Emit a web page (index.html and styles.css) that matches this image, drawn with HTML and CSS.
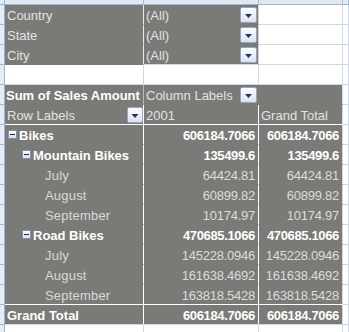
FILE: index.html
```html
<!DOCTYPE html>
<html>
<head>
<meta charset="utf-8">
<link rel="stylesheet" href="styles.css">
</head>
<body>
<div class="sheet">
  <div class="row head"><div class="rh"></div><div class="ch"></div><div class="ch"></div><div class="ch"></div><div class="ch"></div></div>

  <div class="row"><div class="rh"></div><div class="c g ga bb-g">Country</div><div class="c g bb-g"><span class="btn"><svg width="15" height="14" viewBox="0 0 15 14"><path d="M4 6h7l-3.5 4z" fill="#22356a"/></svg></span>(All)</div><div class="c"></div><div class="c"></div></div>
  <div class="row"><div class="rh"></div><div class="c g ga bb-g">State</div><div class="c g bb-g"><span class="btn"><svg width="15" height="14" viewBox="0 0 15 14"><path d="M4 6h7l-3.5 4z" fill="#22356a"/></svg></span>(All)</div><div class="c"></div><div class="c"></div></div>
  <div class="row"><div class="rh"></div><div class="c g ga">City</div><div class="c g"><span class="btn"><svg width="15" height="14" viewBox="0 0 15 14"><path d="M4 6h7l-3.5 4z" fill="#22356a"/></svg></span>(All)</div><div class="c"></div><div class="c"></div></div>

  <div class="row"><div class="rh"></div><div class="c"></div><div class="c"></div><div class="c"></div><div class="c"></div></div>

  <div class="row"><div class="rh"></div><div class="c g bb-g br-s b sum">Sum of Sales Amount</div><div class="c g bb-g br-g"><span class="btn"><svg width="15" height="14" viewBox="0 0 15 14"><path d="M4 6h7l-3.5 4z" fill="#22356a"/></svg></span>Column Labels</div><div class="c g bb-g"></div><div class="c"></div></div>
  <div class="row"><div class="rh"></div><div class="c g br-w bb-w"><span class="btn flush"><svg width="14" height="14" viewBox="0 0 14 14"><path d="M3.5 6h7l-3.5 4z" fill="#22356a"/></svg></span>Row Labels</div><div class="c g br-w bb-w">2001</div><div class="c g bb-w">Grand Total</div><div class="c"></div></div>

  <div class="row"><div class="rh"></div><div class="c g br-w bb-g b l1"><span class="tg"></span>Bikes</div><div class="c g br-w bb-g b n">606184.7066</div><div class="c g bb-g b n">606184.7066</div><div class="c"></div></div>
  <div class="row"><div class="rh"></div><div class="c g br-w bb-g b l2"><span class="tg"></span>Mountain Bikes</div><div class="c g br-w bb-g b n">135499.6</div><div class="c g bb-g b n">135499.6</div><div class="c"></div></div>
  <div class="row"><div class="rh"></div><div class="c g br-w bb-g l3">July</div><div class="c g br-w bb-g n">64424.81</div><div class="c g bb-g n">64424.81</div><div class="c"></div></div>
  <div class="row"><div class="rh"></div><div class="c g br-w bb-g l3">August</div><div class="c g br-w bb-g n">60899.82</div><div class="c g bb-g n">60899.82</div><div class="c"></div></div>
  <div class="row"><div class="rh"></div><div class="c g br-w bb-g l3">September</div><div class="c g br-w bb-g n">10174.97</div><div class="c g bb-g n">10174.97</div><div class="c"></div></div>
  <div class="row"><div class="rh"></div><div class="c g br-w bb-g b l2"><span class="tg"></span>Road Bikes</div><div class="c g br-w bb-g b n">470685.1066</div><div class="c g bb-g b n">470685.1066</div><div class="c"></div></div>
  <div class="row"><div class="rh"></div><div class="c g br-w bb-g l3">July</div><div class="c g br-w bb-g n">145228.0946</div><div class="c g bb-g n">145228.0946</div><div class="c"></div></div>
  <div class="row"><div class="rh"></div><div class="c g br-w bb-g l3">August</div><div class="c g br-w bb-g n">161638.4692</div><div class="c g bb-g n">161638.4692</div><div class="c"></div></div>
  <div class="row"><div class="rh"></div><div class="c g br-w bb-w l3">September</div><div class="c g br-w bb-w n">163818.5428</div><div class="c g bb-w n">163818.5428</div><div class="c"></div></div>

  <div class="row"><div class="rh"></div><div class="c g br-w b">Grand Total</div><div class="c g br-w b n">606184.7066</div><div class="c g b n">606184.7066</div><div class="c"></div></div>

  <div class="row"><div class="rh"></div><div class="c"></div><div class="c"></div><div class="c"></div><div class="c"></div></div>
</div>
</body>
</html>
```

FILE: styles.css
```css
html, body {
  margin: 0;
  padding: 0;
  background: #ffffff;
  overflow: hidden;
}

.sheet {
  font-family: "Liberation Sans", Arial, sans-serif;
  font-size: 13px;
  color: #e2e2e2;
}

.row {
  display: grid;
  grid-template-columns: 5px 139px 115px 84px 1fr;
  height: 20px;
}

.row.head {
  height: 5px;
}

.rh {
  box-sizing: border-box;
  background: #e4ecf7;
  border-right: 1px solid #9eb6ce;
  border-bottom: 1px solid #9eb6ce;
}

.ch {
  box-sizing: border-box;
  background: repeating-linear-gradient(90deg, #e6edf7 0 1px, #d9e3f1 1px 2px);
  border-right: 1px solid #a9bdd6;
  border-bottom: 1px solid #9eb6ce;
}

.c {
  box-sizing: border-box;
  height: 20px;
  border-right: 1px solid #d0d7e5;
  border-bottom: 1px solid #d0d7e5;
  padding: 2px 2px 0 2px;
  line-height: 17px;
  white-space: nowrap;
  overflow: hidden;
}

.g {
  background: #7a7b77;
  color: #e2e2e2;
}

.ga {
  border-right-color: #e9e9e9;
  border-bottom-color: #7a7b77;
}

.bb-g { border-bottom-color: #7a7b77; }
.bb-w { border-bottom-color: #ffffff; }
.br-w { border-right-color: #ffffff; }
.br-g { border-right-color: #7a7b77; }
.br-s { border-right-color: #b9bab7; }

.b {
  font-weight: bold;
  color: #ffffff;
}

.sum {
  padding-left: 1px;
}

.n {
  text-align: right;
  padding-right: 3px;
  letter-spacing: -0.25px;
  color: #dcdcdc;
}

.n.b {
  letter-spacing: -0.35px;
  color: #ffffff;
}

.l1 { padding-left: 3px; }
.l2 { padding-left: 17px; }
.l3 { padding-left: 40px; color: #d9d9d9; letter-spacing: 0.2px; }

.btn {
  float: right;
  box-sizing: border-box;
  width: 17px;
  height: 16px;
  margin-right: -1px;
  border: 1px solid #93a7ca;
  border-radius: 2px;
  background: linear-gradient(#fdfdfe, #dce3ee);
}

.btn.flush {
  width: 16px;
  margin-right: -2px;
}

.btn svg {
  display: block;
}

.tg {
  display: inline-block;
  position: relative;
  box-sizing: border-box;
  width: 9px;
  height: 9px;
  margin-right: 2px;
  vertical-align: 1px;
  border: 1px solid #8193ae;
  background: linear-gradient(#ffffff, #d8dfea);
}

.tg::after {
  content: "";
  position: absolute;
  left: 1px;
  top: 3px;
  width: 5px;
  height: 1px;
  background: #1b2440;
}
```
